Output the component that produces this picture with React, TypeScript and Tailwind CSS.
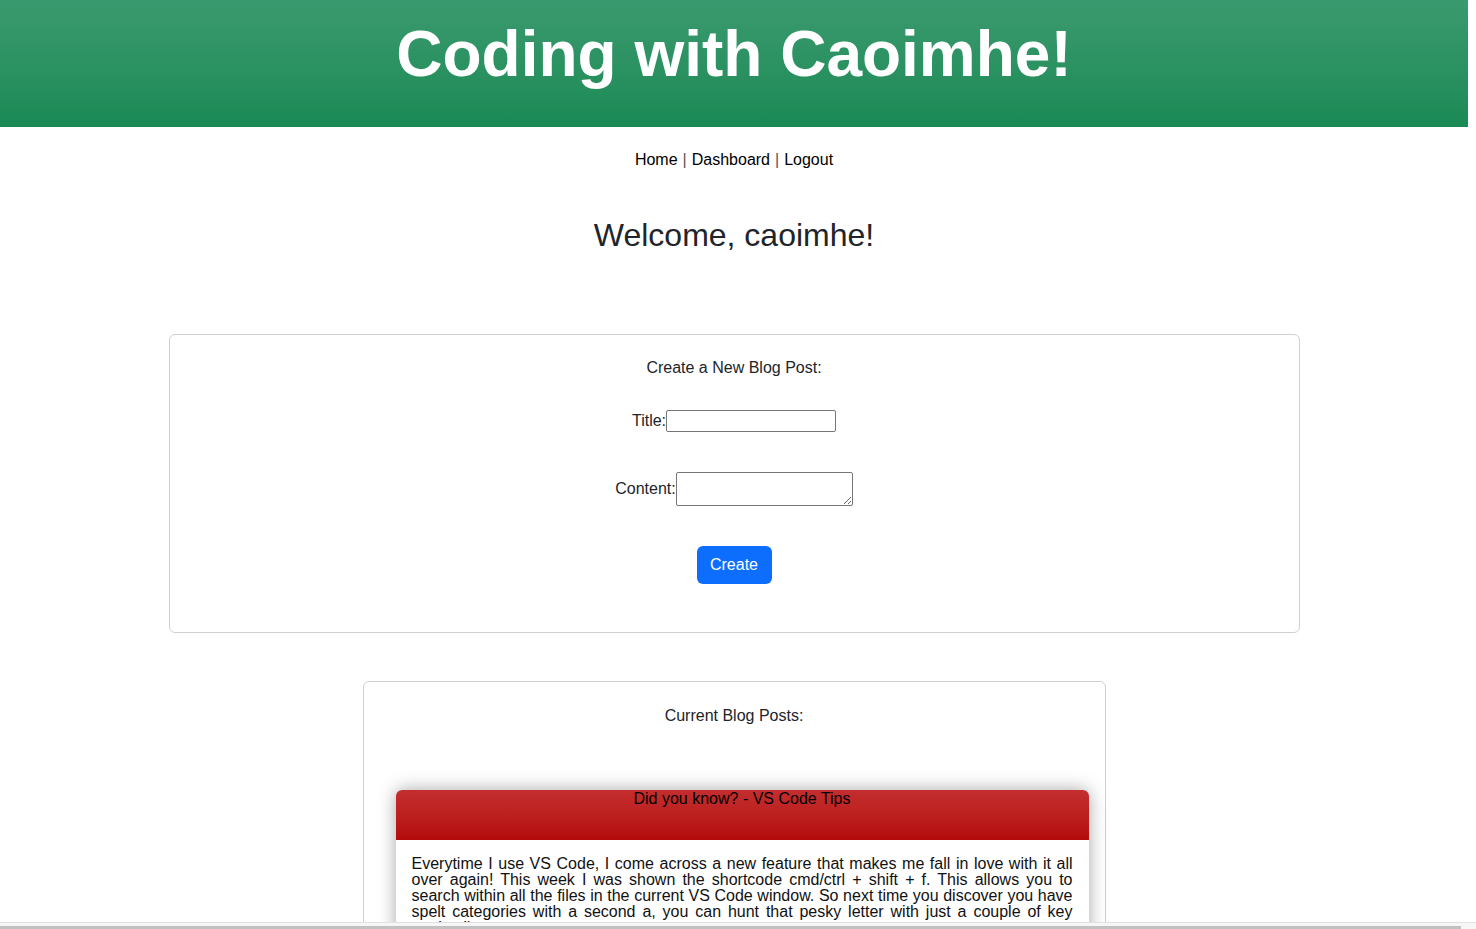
export default function App() {
  return (
    <div className="min-h-screen bg-white font-['Liberation_Sans',Arial,sans-serif] text-[#212529]">
      <div className="w-[1468px]">
        {/* Header */}
        <header className="h-[127px] bg-gradient-to-b from-[#3a9a6f] to-[#1a8a55] flex justify-center">
          <h1 className="mt-[14px] text-[64px] leading-[80px] font-bold text-white">
            Coding with Caoimhe!
          </h1>
        </header>

        {/* Nav */}
        <nav className="mt-[21px] flex justify-center text-[16px] leading-[24px] text-black">
          <a href="#">Home</a>
          <span className="mx-[5px] text-[#555]">|</span>
          <a href="#">Dashboard</a>
          <span className="mx-[5px] text-[#555]">|</span>
          <a href="#">Logout</a>
        </nav>

        <h2 className="mt-[44px] text-center text-[32px] leading-[38px] font-normal">Welcome, caoimhe!</h2>

        {/* Create card */}
        <section className="mt-[80px] mx-auto w-[1131px] h-[299px] border border-[#d0d0d0] rounded-[6px] flex flex-col items-center">
          <p className="mt-[21px] text-[16px] leading-[24px]">Create a New Blog Post:</p>
          <div className="mt-[29px] flex items-center text-[16px] leading-[24px]">
            <label>Title:</label>
            <input className="w-[170px] h-[22px] border border-[#767676] rounded-[2px]" />
          </div>
          <div className="mt-[39px] flex items-center text-[16px] leading-[24px]">
            <label>Content:</label>
            <textarea className="w-[177px] h-[34px] border border-[#767676] rounded-[2px] resize" />
          </div>
          <button className="mt-[40px] w-[75px] h-[38px] bg-[#0d6efd] text-white text-[16px] rounded-[6px]">
            Create
          </button>
        </section>

        {/* Posts card */}
        <section className="mt-[48px] mx-auto w-[743px] border border-[#d0d0d0] rounded-[6px] flex flex-col pb-[40px]">
          <p className="mt-[22px] text-center text-[16px] leading-[24px]">Current Blog Posts:</p>
          <article className="mt-[62px] ml-[32px] w-[693px] rounded-[6px] bg-white shadow-[0_0_18px_rgba(0,0,0,0.35)]">
            <div className="h-[50px] rounded-t-[6px] bg-gradient-to-b from-[#c42e2e] to-[#b30a0a] text-center text-black text-[16px] leading-[18px]">
              Did you know? - VS Code Tips
            </div>
            <p className="px-[16px] pt-[16px] pb-[16px] text-[16px] leading-[16px] text-justify text-[#111]">
              Everytime I use VS Code, I come across a new feature that makes me fall in love with it all over
              again! This week I was shown the shortcode cmd/ctrl + shift + f. This allows you to search within
              all the files in the current VS Code window. So next time you discover you have spelt categories
              with a second a, you can hunt that pesky letter with just a couple of key strokes!)
            </p>
          </article>
        </section>
      </div>

      {/* horizontal scrollbar overlay */}
      <div className="fixed left-0 right-0 bottom-0 h-[7px] bg-[#f6f6f6] border-t border-[#e2e2e2]">
        <div className="absolute left-0 bottom-0 w-[1461px] h-[3px] bg-[#c1c1c1]" />
      </div>
    </div>
  )
}
